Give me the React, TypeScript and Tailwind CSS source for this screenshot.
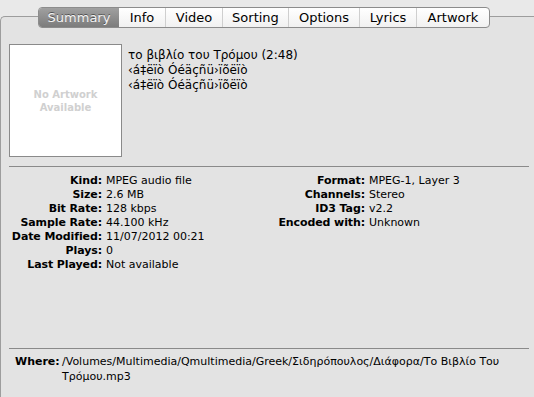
import React from 'react';

const tabs = [
  { label: 'Summary', w: 'w-[80px]' },
  { label: 'Info', w: 'w-[46px]' },
  { label: 'Video', w: 'w-[57px]' },
  { label: 'Sorting', w: 'w-[66px]' },
  { label: 'Options', w: 'w-[71px]' },
  { label: 'Lyrics', w: 'w-[57px]' },
  { label: 'Artwork', w: 'w-[73px]' },
];

const leftRows = [
  ['Kind:', 'MPEG audio file'],
  ['Size:', '2.6 MB'],
  ['Bit Rate:', '128 kbps'],
  ['Sample Rate:', '44.100 kHz'],
  ['Date Modified:', '11/07/2012 00:21'],
  ['Plays:', '0'],
  ['Last Played:', 'Not available'],
];

const rightRows = [
  ['Format:', 'MPEG-1, Layer 3'],
  ['Channels:', 'Stereo'],
  ['ID3 Tag:', 'v2.2'],
  ['Encoded with:', 'Unknown'],
];

const font = { fontFamily: '"DejaVu Sans", "Noto Sans", sans-serif' };

export default function App() {
  return (
    <div
      className="w-[534px] h-[397px] bg-[#e9e9e9] pt-[7px] flex flex-col overflow-hidden text-black"
      style={font}
    >
      {/* segmented tab control */}
      <div className="relative z-10 flex pl-[38px]">
        <div className="flex h-[21px] rounded-[4px] border border-[#8c8c8c] bg-gradient-to-b from-white to-[#f1f1f1] overflow-hidden">
          {tabs.map((t, i) => (
            <div
              key={t.label}
              className={
                i === 0
                  ? `${t.w} flex items-center justify-center text-[13px] text-[#f4f4f4] bg-gradient-to-b from-[#a0a0a0] to-[#7c7c7c] [text-shadow:0_-1px_0_rgba(0,0,0,0.45)]`
                  : `${t.w} flex items-center justify-center text-[13px] text-black ${i > 1 ? 'border-l border-[#cfcfcf]' : ''}`
              }
            >
              {t.label}
            </div>
          ))}
        </div>
      </div>

      {/* content box */}
      <div className="-mt-[12px] flex-1 bg-[#e3e3e3] border-t border-l border-[#9d9d9d] rounded-tl-[5px] pl-[8px] pr-[5px] pt-[27px]">
        <div className="flex gap-[6px] h-[113px]">
          <div className="w-[113px] h-[113px] bg-white border border-[#8a8a8a] flex items-center justify-center">
            <div className="text-center text-[10px] leading-[13px] font-bold text-[#d0d0d0]">
              No Artwork
              <br />
              Available
            </div>
          </div>
          <div className="pt-[4px] text-[12px] leading-[15px]">
            <div>το βιβλίο του Τρόμου (2:48)</div>
            <div>‹á‡ëïò Óéäçñü›ïõëïò</div>
            <div>‹á‡ëïò Óéäçñü›ïõëïò</div>
          </div>
        </div>

        <div className="mt-[9px] h-px bg-[#8a8a8a]" />

        <div className="flex pt-[7px] h-[181px] text-[11px] leading-[14px] whitespace-nowrap">
          <div className="w-[260px] shrink-0 grid grid-cols-[93px_1fr] gap-x-[4px] content-start">
            {leftRows.map(([k, v]) => (
              <React.Fragment key={k}>
                <div className="text-right font-bold tracking-[-0.1px]">{k}</div>
                <div>{v}</div>
              </React.Fragment>
            ))}
          </div>
          <div className="flex-1 grid grid-cols-[96px_1fr] gap-x-[4px] content-start">
            {rightRows.map(([k, v]) => (
              <React.Fragment key={k}>
                <div className="text-right font-bold tracking-[-0.1px]">{k}</div>
                <div>{v}</div>
              </React.Fragment>
            ))}
          </div>
        </div>

        <div className="h-px bg-[#8a8a8a]" />

        <div className="flex pt-[5px] pl-[6px] text-[11px] leading-[15px]">
          <div className="font-bold w-[47px] shrink-0">Where:</div>
          <div className="w-[450px]">
            /Volumes/Multimedia/Qmultimedia/Greek/Σιδηρόπουλος/Διάφορα/Το Βιβλίο Του Τρόμου.mp3
          </div>
        </div>
      </div>
    </div>
  );
}
